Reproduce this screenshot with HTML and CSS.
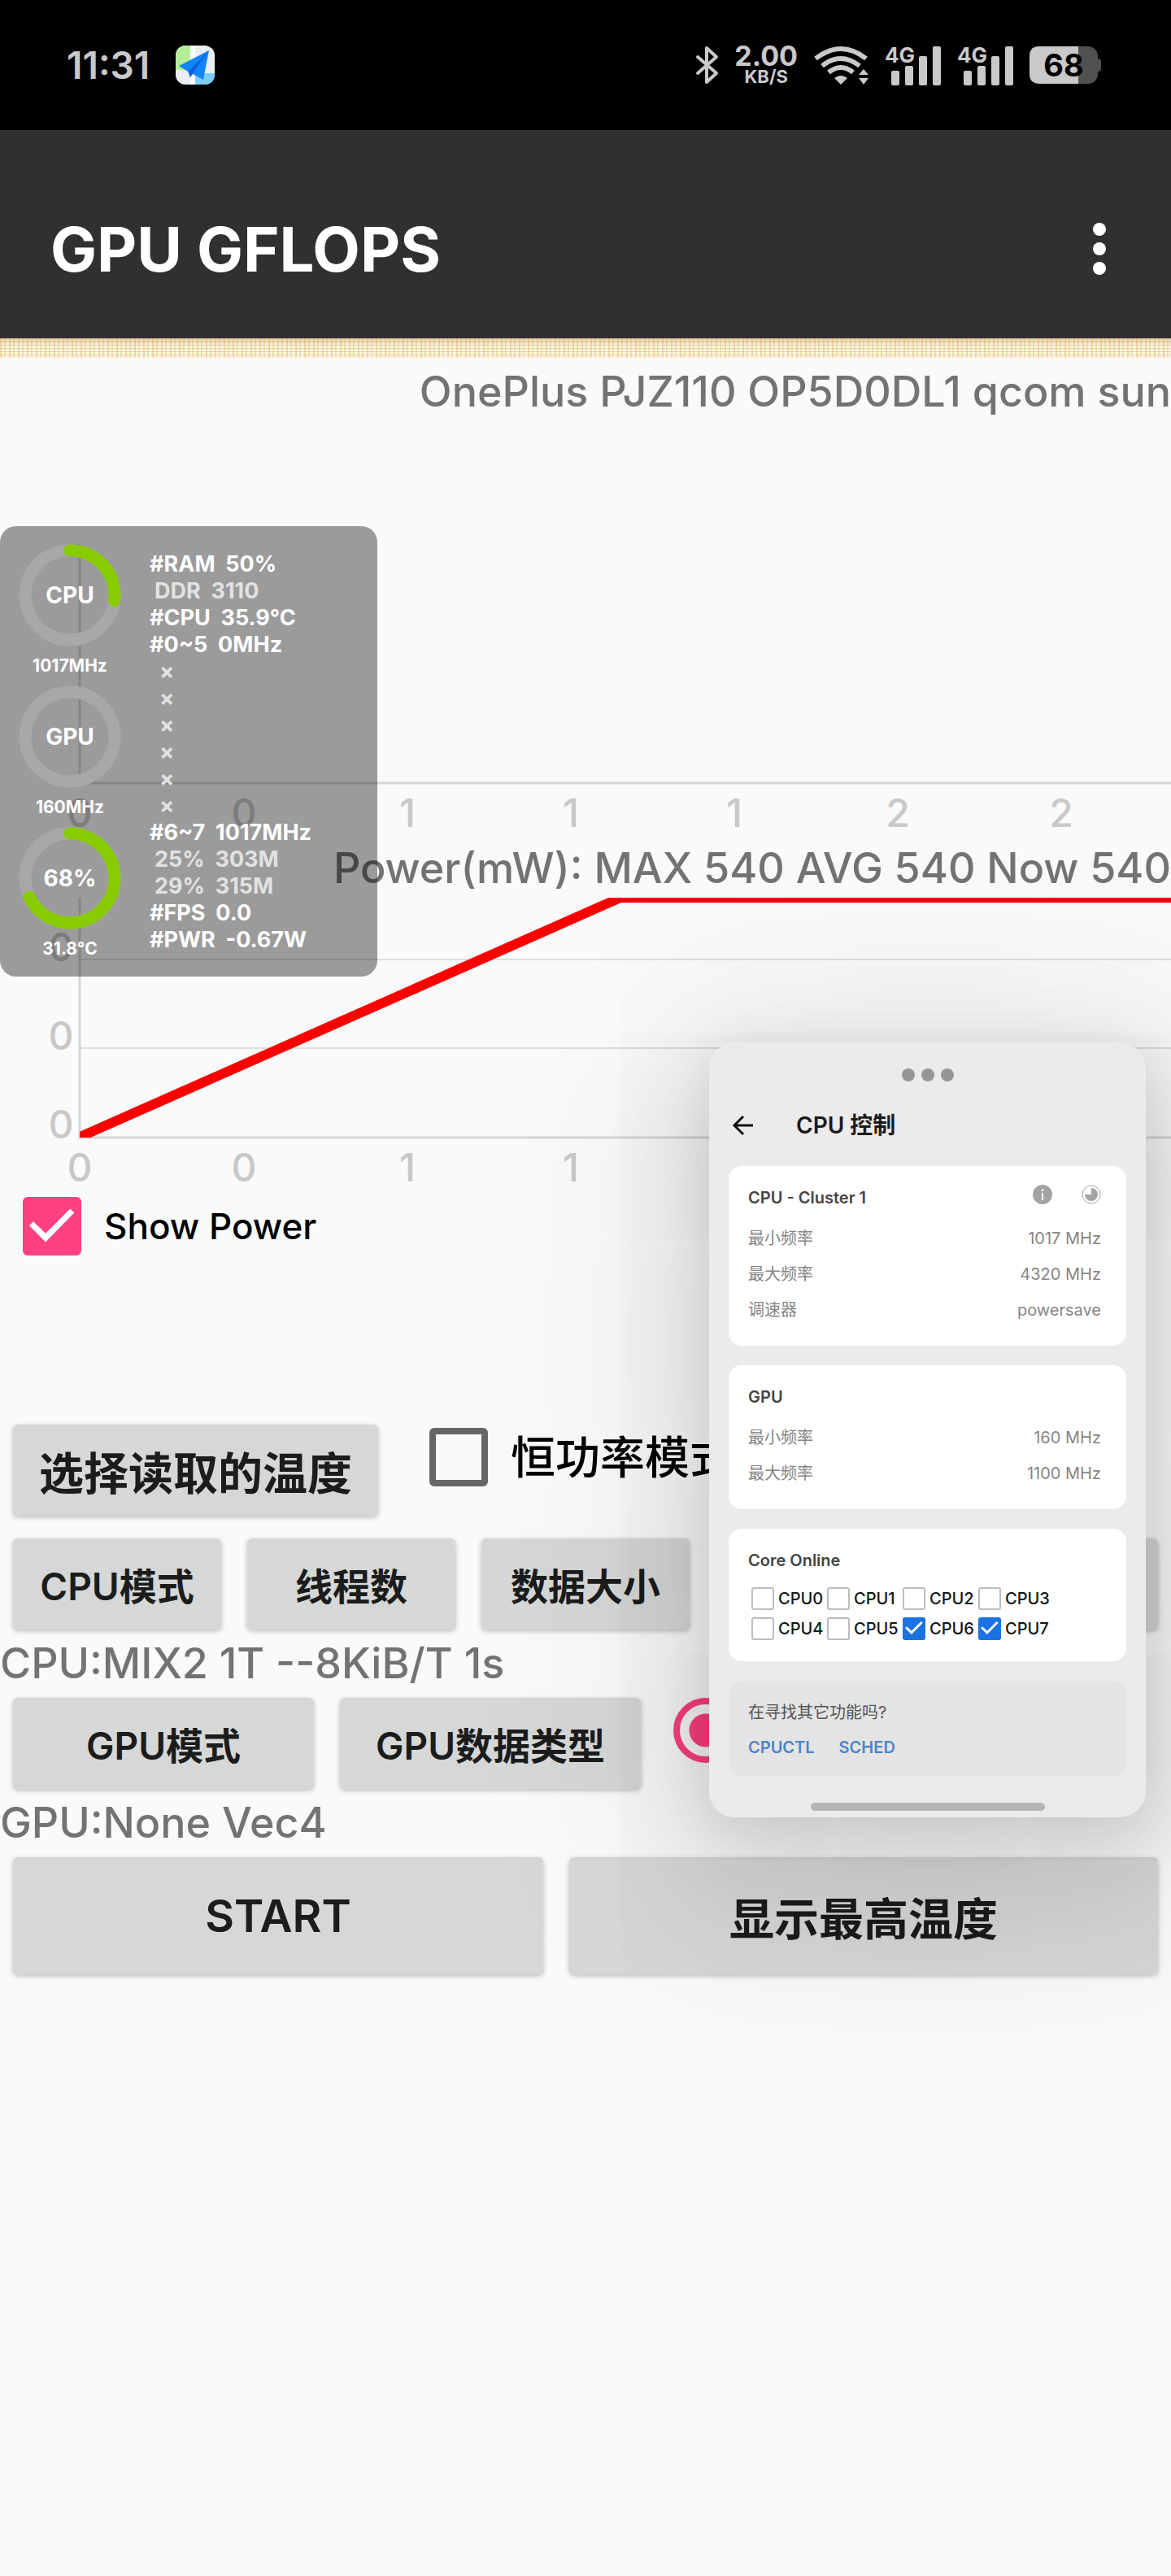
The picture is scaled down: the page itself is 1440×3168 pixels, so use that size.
FILE: index.html
```html
<!DOCTYPE html>
<html lang="zh-CN">
<head>
<meta charset="utf-8">
<meta name="viewport" content="width=device-width, initial-scale=1">
<title>GPU GFLOPS</title>
<link rel="stylesheet" href="styles.css">
</head>
<body>
<div class="screen">
  <header class="status">
    <div class="status-left">
      <time class="clock">11:31</time>
      <svg class="map-icon" viewBox="0 0 48 48" aria-hidden="true">
        <defs><clipPath id="icon-shape"><rect width="48" height="48" rx="12"/></clipPath></defs>
        <g clip-path="url(#icon-shape)">
          <rect width="48" height="48" fill="#e9eef3"/>
          <rect width="18" height="30" fill="#b5ee98"/>
          <rect x="18" width="6" height="48" fill="#fff"/>
          <rect x="24" y="34" width="24" height="14" fill="#7ccdfb"/>
          <path d="M41 6 4 25l11 7 3 7 3-4 13 7z" fill="#1285fb"/>
          <path d="M41 6 16 32l2 7 3-5z" fill="#0a5fd6"/>
        </g>
      </svg>
    </div>
    <div class="status-right">
      <svg width="27" height="48" viewBox="0 0 27 48" aria-hidden="true"><path d="M2 14 25 34 13 45V3l12 11L2 34" fill="none" stroke="#c9c9c9" stroke-width="4" stroke-linejoin="round" stroke-linecap="round"/></svg>
      <div class="net-speed"><span class="net-value">2.00</span><span class="net-unit">KB/S</span></div>
      <svg width="67" height="48" viewBox="0 0 67 48" aria-hidden="true">
        <g fill="none" stroke="#c9c9c9" stroke-width="6">
          <path d="M2 16Q33-8 64 16"/><path d="M10 25Q33 7 56 25"/><path d="M18 33Q33 21 48 33"/>
        </g>
        <path d="M25 40q8-6 16 0l-8 8zM55 36h12l-6-7zM55 40h12l-6 8z" fill="#c9c9c9"/>
      </svg>
      <svg width="69" height="50" viewBox="0 0 69 50" aria-label="4G"><text x="0" y="22" class="sig-text">4G</text><g fill="#c9c9c9"><rect x="8" y="32" width="10" height="18" rx="2"/><rect x="25" y="26" width="10" height="24" rx="2"/><rect x="42" y="14" width="10" height="36" rx="2"/><rect x="59" y="2" width="10" height="48" rx="2"/></g></svg>
      <svg width="69" height="50" viewBox="0 0 69 50" aria-label="4G"><text x="0" y="22" class="sig-text">4G</text><g fill="#c9c9c9"><rect x="8" y="32" width="10" height="18" rx="2"/><rect x="25" y="26" width="10" height="24" rx="2"/><rect x="42" y="14" width="10" height="36" rx="2"/><rect x="59" y="2" width="10" height="48" rx="2"/></g></svg>
      <svg width="88" height="46" viewBox="0 0 88 46" aria-label="68%">
        <rect x="70" y="15" width="18" height="16" rx="4" fill="#505050"/>
        <rect width="84" height="46" rx="12" fill="#505050"/>
        <path d="M12 0H60V46H12Q0 46 0 34V12Q0 0 12 0z" fill="#c9c9c9"/>
        <text x="42" y="37" text-anchor="middle" class="bat-text">68</text>
      </svg>
    </div>
  </header>

  <div class="app-bar">
    <h1 class="app-title">GPU GFLOPS</h1>
    <button class="menu" type="button" aria-label="Menu"><i></i><i></i><i></i></button>
  </div>
  <div class="strip"></div>

  <main class="content">
    <p class="info right">OnePlus PJZ110 OP5D0DL1 qcom sun</p>

    <svg class="chart" viewBox="0 0 1440 508" aria-hidden="true">
      <path d="M98 145V439M98 439H1440" class="axis"/>
      <g class="ticks">
        <text x="98" y="493">0</text><text x="300" y="493">0</text><text x="501" y="493">1</text><text x="702" y="493">1</text><text x="903" y="493">1</text><text x="1104" y="493">2</text><text x="1305" y="493">2</text>
      </g>
    </svg>

    <p class="info right power">Power(mW): MAX 540 AVG 540 Now 540</p>

    <svg class="chart" viewBox="0 0 1440 364" aria-hidden="true">
      <path d="M98 76H1440M98 185H1440" class="grid"/>
      <path d="M98 0V295H1440" class="axis"/>
      <clipPath id="plot"><rect x="98" width="1342" height="295"/></clipPath>
      <path d="M92 297 763 0H1450" class="series" clip-path="url(#plot)"/>
      <g class="ticks">
        <text x="75" y="78">0</text><text x="75" y="187">0</text><text x="75" y="296">0</text>
        <text x="98" y="349">0</text><text x="300" y="349">0</text><text x="501" y="349">1</text><text x="702" y="349">1</text><text x="903" y="349">1</text><text x="1104" y="349">2</text><text x="1305" y="349">2</text>
      </g>
    </svg>

    <label class="check show-power"><input type="checkbox" class="box" checked><span>Show Power</span></label>

    <div class="row temp-row">
      <button class="btn big" type="button">选择读取的温度</button>
      <label class="check mode"><input type="checkbox" class="box"><span>恒功率模式</span></label>
    </div>
    <div class="row">
      <button class="btn grow" type="button">CPU模式</button>
      <button class="btn grow" type="button">线程数</button>
      <button class="btn grow" type="button">数据大小</button>
      <button class="btn grow" type="button"></button>
      <button class="btn grow" type="button"></button>
    </div>
    <p class="info">CPU:MIX2 1T --8KiB/T 1s</p>
    <div class="row">
      <button class="btn wide" type="button">GPU模式</button>
      <button class="btn wide" type="button">GPU数据类型</button>
      <input type="radio" class="radio" checked aria-label="GPU">
    </div>
    <p class="info">GPU:None Vec4</p>
    <div class="row">
      <button class="btn tall start" type="button">START</button>
      <button class="btn tall grow" type="button">显示最高温度</button>
    </div>
  </main>

  <aside class="monitor">
    <div class="gauges">
      <div class="gauge">
        <svg viewBox="0 0 126 126"><circle cx="63" cy="63" r="55" class="track"/><circle cx="63" cy="63" r="55" class="value" pathLength="100" stroke-dasharray="27 100" transform="rotate(-90 63 63)"/><text x="63" y="73">CPU</text></svg>
        <span>1017MHz</span>
      </div>
      <div class="gauge">
        <svg viewBox="0 0 126 126"><circle cx="63" cy="63" r="55" class="track"/><text x="63" y="73">GPU</text></svg>
        <span>160MHz</span>
      </div>
      <div class="gauge">
        <svg viewBox="0 0 126 126"><circle cx="63" cy="63" r="55" class="track"/><circle cx="63" cy="63" r="55" class="value" pathLength="100" stroke-dasharray="68 100" transform="rotate(-90 63 63)"/><text x="63" y="73">68%</text></svg>
        <span>31.8°C</span>
      </div>
    </div>
    <ul class="stats">
      <li>#RAM&nbsp; 50%</li>
      <li class="dim">DDR&nbsp; 3110</li>
      <li>#CPU&nbsp; 35.9°C</li>
      <li>#0~5&nbsp; 0MHz</li>
      <li class="dim off">×</li><li class="dim off">×</li><li class="dim off">×</li>
      <li class="dim off">×</li><li class="dim off">×</li><li class="dim off">×</li>
      <li>#6~7&nbsp; 1017MHz</li>
      <li class="dim">25%&nbsp; 303M</li>
      <li class="dim">29%&nbsp; 315M</li>
      <li>#FPS&nbsp; 0.0</li>
      <li>#PWR&nbsp; -0.67W</li>
    </ul>
  </aside>

  <section class="window">
    <div class="grip"><i></i><i></i><i></i></div>
    <header class="win-head">
      <button class="back" type="button" aria-label="返回"><svg width="26" height="26" viewBox="0 0 26 26"><path d="M25 13H2M13 2 2 13 13 24" fill="none" stroke="#111" stroke-width="3"/></svg></button>
      <h2>CPU 控制</h2>
    </header>
    <div class="cards">
      <section class="card">
        <div class="card-head">
          <h3>CPU - Cluster 1</h3>
          <div class="card-icons">
            <svg width="24" height="24" viewBox="0 0 24 24"><circle cx="12" cy="12" r="12" fill="#a3a3a3"/><path d="M12 10v9M12 5v3" stroke="#fff" stroke-width="2"/></svg>
            <svg width="24" height="24" viewBox="0 0 24 24"><circle cx="12" cy="12" r="11" fill="none" stroke="#a3a3a3"/><path d="M12 12V4a8 8 0 1 1-8 8z" fill="#a3a3a3"/></svg>
          </div>
        </div>
        <dl>
          <div><dt>最小频率</dt><dd>1017 MHz</dd></div>
          <div><dt>最大频率</dt><dd>4320 MHz</dd></div>
          <div><dt>调速器</dt><dd>powersave</dd></div>
        </dl>
      </section>
      <section class="card">
        <div class="card-head"><h3>GPU</h3></div>
        <dl>
          <div><dt>最小频率</dt><dd>160 MHz</dd></div>
          <div><dt>最大频率</dt><dd>1100 MHz</dd></div>
        </dl>
      </section>
      <section class="card">
        <div class="card-head"><h3>Core Online</h3></div>
        <div class="cores">
          <label><input type="checkbox">CPU0</label><label><input type="checkbox">CPU1</label><label><input type="checkbox">CPU2</label><label><input type="checkbox">CPU3</label>
          <label><input type="checkbox">CPU4</label><label><input type="checkbox">CPU5</label><label><input type="checkbox" checked>CPU6</label><label><input type="checkbox" checked>CPU7</label>
        </div>
      </section>
      <section class="card more">
        <p>在寻找其它功能吗?</p>
        <nav><a href="#cpuctl">CPUCTL</a><a href="#sched">SCHED</a></nav>
      </section>
    </div>
    <div class="handle"></div>
  </section>
</div>
</body>
</html>
```
FILE: styles.css
```css
* { box-sizing: border-box; }
body, h1, h2, h3, p, ul, dl, dd { margin: 0; padding: 0; }
body {
  background: #fafafa;
  color: #000;
  font-family: Inter, "Noto Sans CJK SC", sans-serif;
}
button { font: inherit; border: 0; padding: 0; background: none; }
svg { display: block; overflow: visible; }

.screen { position: relative; min-height: 100vh; overflow: hidden; }

/* Status bar */
.status {
  display: flex;
  justify-content: space-between;
  align-items: center;
  height: 160px;
  padding: 0 86px 0 82px;
  background: #000;
  color: #c9c9c9;
}
.status-left { display: flex; align-items: center; gap: 32px; }
.status-right { display: flex; align-items: center; gap: 20px; }
.clock { font-size: 46px; line-height: 56px; font-weight: 600; }
.map-icon { width: 48px; height: 48px; }
.net-speed { display: flex; flex-direction: column; align-items: center; font-weight: 700; }
.net-value { font-size: 34px; line-height: 28px; }
.net-unit { font-size: 22px; line-height: 22px; }
.sig-text { fill: #c9c9c9; font-size: 26px; font-weight: 700; }
.bat-text { fill: #000; font-size: 38px; font-weight: 700; }

/* App bar */
.app-bar {
  display: flex;
  justify-content: space-between;
  align-items: center;
  height: 256px;
  padding: 36px 80px 0 62px;
  background: #303030;
}
.app-title { color: #fff; font-size: 76px; line-height: 96px; font-weight: 700; }
.menu { display: flex; flex-direction: column; gap: 8px; }
.menu i { width: 16px; height: 16px; border-radius: 50%; background: #fff; }
.strip {
  height: 24px;
  background:
    linear-gradient(#9a703044, #ffffff00 40%),
    repeating-linear-gradient(90deg, #e0a04055 0 2px, #ffffff00 2px 5px, #b8b83c44 5px 7px, #ffffff00 7px 11px),
    repeating-linear-gradient(#d89a7866 0 1px, #ffffff00 1px 4px),
    #fdf6de;
}

/* Benchmark controls */
.info { color: #737373; font-size: 52px; line-height: 84px; font-weight: 500; }
.info.right { text-align: right; }
.info.power { line-height: 72px; }
.chart { width: 100%; height: auto; }
.axis { fill: none; stroke: #d6d6d6; stroke-width: 3; }
.grid { fill: none; stroke: #dedede; stroke-width: 2; }
.series { fill: none; stroke: #fa0000; stroke-width: 12; }
.ticks { fill: #c8c8c8; font-size: 48px; font-weight: 500; text-anchor: middle; }

.check { display: flex; align-items: center; gap: 28px; }
.show-power { margin: 4px 28px 208px; font-size: 44px; line-height: 72px; font-weight: 500; }
.box {
  appearance: none;
  flex: none;
  width: 72px;
  height: 72px;
  margin: 0;
  border: 8px solid #666;
  border-radius: 6px;
}
.box:checked { border: 0; background: #ff4081; }
.box:checked::before {
  content: "";
  display: block;
  height: 100%;
  background: #fff;
  clip-path: polygon(11% 49%, 18% 42%, 39% 62%, 81% 20%, 88% 27%, 39% 77%);
}
.row { display: flex; gap: 32px; padding: 0 16px; }
.temp-row { gap: 63px; margin-bottom: 28px; }
.mode { align-self: flex-start; padding-top: 4px; font-size: 55px; line-height: 72px; font-weight: 500; white-space: nowrap; }
.btn {
  height: 112px;
  border-radius: 6px;
  background: #d6d7d7;
  box-shadow: 0 2px 6px #00000040;
  color: #1b1c1c;
  font-size: 46px;
  font-weight: 600;
  white-space: nowrap;
}
.btn.big { width: 449px; font-size: 55px; }
.grow { flex: 1; }
.wide { width: 370px; }
.btn.tall { height: 144px; font-size: 55px; }
.start { width: 652px; }
.radio {
  appearance: none;
  width: 80px;
  height: 80px;
  margin: 0 8px;
  border: 8px solid #ff4081;
  border-radius: 50%;
  background: radial-gradient(circle, #ff4081 20px, #ffffff00 21px);
}

/* Floating performance monitor */
.monitor {
  position: absolute;
  left: 0;
  top: 647px;
  display: flex;
  gap: 35px;
  width: 464px;
  padding: 22px 23px 26px;
  border-radius: 20px;
  background: #00000061;
  color: #fff;
  font-weight: 700;
}
.gauges { width: 126px; }
.gauge { height: 174px; font-size: 21px; line-height: 48px; text-align: center; }
.gauge:last-child { height: 158px; }
.gauge svg { width: 126px; height: 126px; }
.gauge text { fill: #fff; font-size: 28px; text-anchor: middle; }
.track { fill: none; stroke: #a8a8a8; stroke-width: 15; }
.value { fill: none; stroke: #8c0; stroke-width: 15; stroke-linecap: round; }
.stats { list-style: none; padding-top: 8px; font-size: 27px; line-height: 33px; white-space: nowrap; }
.stats .dim { padding-left: 6px; color: #e2e2e2; }
.stats .off { padding-left: 12px; }

/* Floating CPU window */
.window {
  position: absolute;
  right: 31px;
  top: 1282px;
  width: 537px;
  padding: 32px 24px 8px;
  border-radius: 32px;
  background: #ebebeb;
  box-shadow: 0 12px 60px #00000014, 0 30px 140px 10px #00000014, 0 50px 240px 60px #00000020;
}
.grip { display: flex; justify-content: center; gap: 8px; }
.grip i { width: 16px; height: 16px; border-radius: 50%; background: #969696; }
.win-head { display: flex; align-items: center; gap: 52px; height: 44px; margin: 32px 0 28px 5px; }
.win-head h2 { color: #1b1b1b; font-size: 28px; line-height: 40px; font-weight: 600; }
.cards { display: flex; flex-direction: column; gap: 24px; }
.card { padding: 23px 31px 20px 24px; border-radius: 16px; background: #fff; font-size: 20px; line-height: 32px; }
.card-head { display: flex; justify-content: space-between; margin-bottom: 18px; }
.card h3 { color: #444; font-size: 20px; line-height: 32px; font-weight: 600; }
.card-icons { display: flex; gap: 36px; }
.card dl { display: flex; flex-direction: column; gap: 12px; color: #858585; padding-bottom: 8px; }
.card dl div { display: flex; justify-content: space-between; }
.cores { display: grid; grid-template-columns: repeat(4, 93px); row-gap: 8px; margin: -2px 0 6px 4px; color: #151515; font-weight: 500; }
.cores label { display: flex; align-items: center; gap: 5px; height: 29px; }
.cores input { appearance: none; flex: none; width: 28px; height: 28px; margin: 0; border: 2px solid #bdbdbd; border-radius: 3px; }
.cores input:checked { border: 0; background: #1a73e0; }
.cores input:checked::before {
  content: "";
  display: block;
  height: 100%;
  background: #fff;
  clip-path: polygon(11% 49%, 18% 42%, 39% 62%, 81% 20%, 88% 27%, 39% 77%);
}
.more { background: #e4e4e4; color: #555; }
.more nav { display: flex; gap: 30px; margin-top: 11px; }
.more a { color: #4b86c9; font-weight: 600; text-decoration: none; }
.handle { width: 288px; height: 10px; margin: 32px auto 0; border-radius: 5px; background: #b5b5b5; }
```
